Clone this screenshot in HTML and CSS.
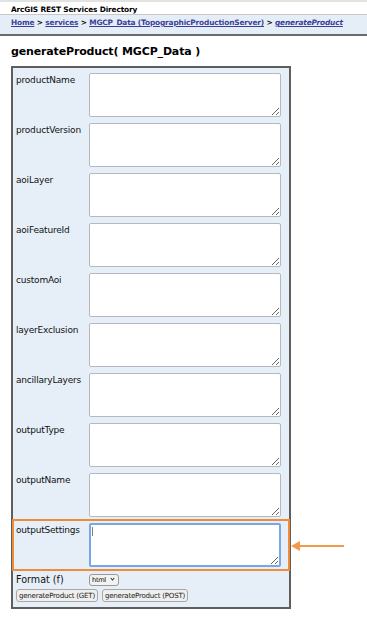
FILE: index.html
```html
<!DOCTYPE html>
<html>
<head>
<meta charset="utf-8">
<title>generateProduct (MGCP_Data)</title>
<link rel="stylesheet" href="styles.css">
</head>
<body>
<div class="page">
  <div class="userbar">ArcGIS REST Services Directory</div>
  <div class="breadcrumbs">
    <a href="#">Home</a> &gt; <a href="#">services</a> &gt; <a href="#">MGCP_Data (TopographicProductionServer)</a> &gt; <a href="#" class="current">generateProduct</a>
  </div>
  <h2 class="heading">generateProduct( MGCP_Data )</h2>
  <form class="formbox">
    <div class="row"><label>productName</label><textarea></textarea></div>
    <div class="row"><label>productVersion</label><textarea></textarea></div>
    <div class="row"><label>aoiLayer</label><textarea></textarea></div>
    <div class="row"><label>aoiFeatureId</label><textarea></textarea></div>
    <div class="row"><label>customAoi</label><textarea></textarea></div>
    <div class="row"><label>layerExclusion</label><textarea></textarea></div>
    <div class="row"><label>ancillaryLayers</label><textarea></textarea></div>
    <div class="row"><label>outputType</label><textarea></textarea></div>
    <div class="row"><label>outputName</label><textarea></textarea></div>
    <div class="row highlight"><label>outputSettings</label><textarea class="focused"></textarea></div>
    <div class="format-row"><label>Format (f)</label><span class="fmt-wrap"><select class="fmt"><option>html</option></select></span></div>
    <div class="buttons">
      <button type="button" class="btn">generateProduct (GET)</button>
      <button type="button" class="btn">generateProduct (POST)</button>
    </div>
  </form>
  <svg class="callout" width="56" height="14" viewBox="0 0 56 14">
    <line x1="6" y1="7" x2="53" y2="7" stroke="#f2994a" stroke-width="2"/>
    <polygon points="0,7 9,2 9,12" fill="#f2994a"/>
  </svg>
</div>
</body>
</html>
```
FILE: styles.css
```css
html, body {
  margin: 0;
  padding: 0;
  background: #ffffff;
}
body {
  font-family: Verdana, "DejaVu Sans", sans-serif;
  color: #000;
  border-top: 2px solid #e2e2e2;
}
.page {
  position: relative;
  min-height: 619px;
}
.userbar {
  font-size: 7.4px;
  font-weight: bold;
  letter-spacing: -0.15px;
  padding: 3px 11px 0;
  height: 9px;
  color: #000;
}
.breadcrumbs {
  font-size: 7.4px;
  font-weight: bold;
  letter-spacing: -0.15px;
  background: #e5eef7;
  border-top: 1px solid #c8c8c8;
  border-bottom: 2px solid #6b6b6b;
  padding: 3px 11px 0;
  box-sizing: border-box;
  height: 22px;
  color: #000;
}
.breadcrumbs a {
  color: #3c3f99;
  text-decoration: underline;
}
.breadcrumbs a.current {
  font-style: italic;
}
.heading {
  font-size: 11px;
  font-weight: bold;
  margin: 0;
  padding: 9px 11px 0;
  height: 21px;
  letter-spacing: -0.15px;
}
.formbox {
  margin: 0 0 0 11px;
  width: 280px;
  box-sizing: border-box;
  border: 2px solid #5e5e5e;
  background: #e6eff8;
  padding: 2px 0 5px;
  display: flex;
  flex-direction: column;
}
.row {
  display: grid;
  grid-template-columns: 73px 192px;
  padding: 3px 0 3px 3px;
  height: 50px;
  box-sizing: border-box;
}
.row label {
  font-size: 9px;
  letter-spacing: -0.2px;
  padding-top: 2px;
  color: #111;
}
.row textarea {
  width: 192px;
  height: 44px;
  box-sizing: border-box;
  margin: 0;
  border: 1px solid #b5b8bd;
  border-radius: 2px;
  background: #fff;
  padding: 2px;
  font-size: 9px;
}
.row.highlight {
  outline: 2px solid #ef8c3a;
  outline-offset: -1px;
}
.row textarea.focused {
  border: 2px solid #79a6e6;
  background-color: #fff;
  background-image: linear-gradient(#808080, #808080);
  background-repeat: no-repeat;
  background-size: 1px 9px;
  background-position: 1px 2px;
}
.format-row {
  display: grid;
  grid-template-columns: 73px 60px;
  padding: 2px 0 0 3px;
  height: 17px;
  box-sizing: border-box;
  align-items: center;
}
.format-row label {
  font-size: 9.6px;
  color: #111;
}
.fmt-wrap {
  position: relative;
  display: flex;
  width: 30px;
  height: 12px;
}
.fmt {
  display: block;
  -webkit-appearance: none;
  appearance: none;
  font-family: Verdana, "DejaVu Sans", sans-serif;
  font-size: 6.6px;
  letter-spacing: -0.3px;
  width: 30px;
  height: 12px;
  padding: 0 0 0 2px;
  margin: 0;
  border: 1px solid #9a9a9a;
  border-radius: 3px;
  background: #f2f2f2;
  color: #000;
  line-height: 10px;
}
.fmt-wrap::after {
  content: "";
  position: absolute;
  right: 5px;
  top: 3px;
  width: 2px;
  height: 2px;
  border-right: 1px solid #333;
  border-bottom: 1px solid #333;
  transform: rotate(45deg);
  pointer-events: none;
}
.buttons {
  display: flex;
  gap: 4px;
  padding: 2px 0 0 3px;
}
.btn {
  font-family: Verdana, "DejaVu Sans", sans-serif;
  font-size: 7.1px;
  letter-spacing: -0.25px;
  height: 13px;
  padding: 0 2px;
  margin: 0;
  border: 1px solid #a8a8a8;
  border-radius: 3px;
  background: #efefef;
  color: #222;
  line-height: 11px;
}
.callout {
  position: absolute;
  left: 291px;
  top: 537px;
}
```
